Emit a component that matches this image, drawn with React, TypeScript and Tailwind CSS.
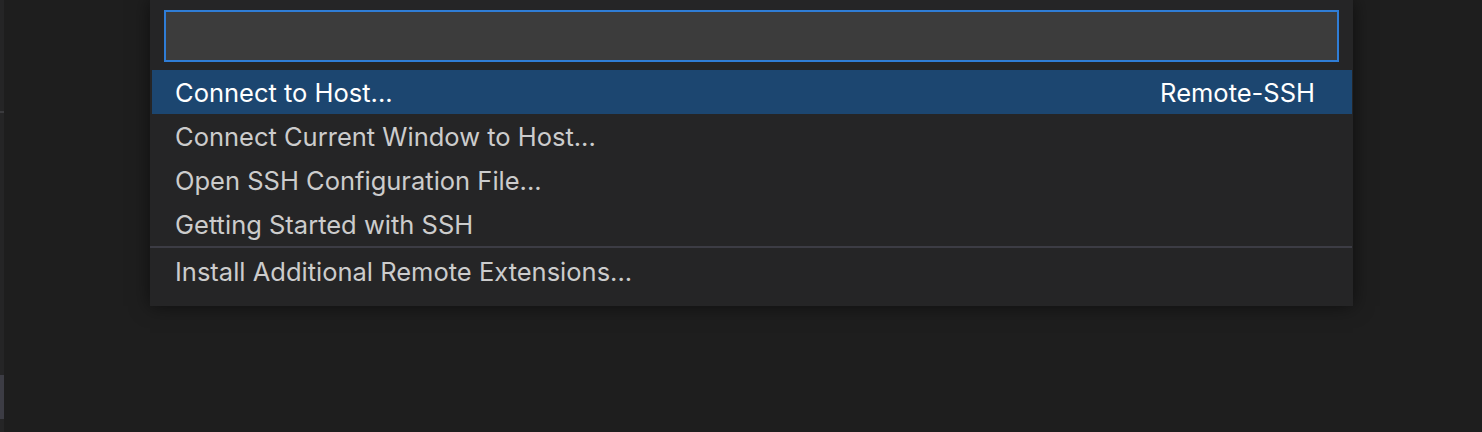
import React from "react";

const ITEMS = [
    { label: "Connect to Host...", detail: "Remote-SSH", selected: true },
    { label: "Connect Current Window to Host..." },
    { label: "Open SSH Configuration File..." },
    { label: "Getting Started with SSH" },
];

export default function App() {
    return (
        <div
            className="relative w-[1482px] h-[432px] overflow-hidden bg-[#1e1e1e]"
            style={{ fontFamily: "Inter, 'Noto Sans', sans-serif" }}
        >
            {/* left edge of sidebar */}
            <div className="absolute left-0 top-0 h-full w-[4px] bg-[#252526]">
                <div className="mt-[111px] h-[2px] bg-[#3a3a3d]" />
                <div className="mt-[262px] h-[44px] bg-[#3c3c44]" />
            </div>

            {/* quick pick */}
            <div className="absolute left-[150px] top-0 w-[1203px] h-[306px] bg-[#252526] shadow-[0_0_18px_rgba(0,0,0,0.55)] flex flex-col">
                <div className="px-[14px] pt-[10px] pb-[8px]">
                    <div className="h-[52px] border-2 border-[#2f7dd6] bg-[#3c3c3c]" />
                </div>
                <div className="flex flex-col pl-[2px] pr-[1px]">
                    {ITEMS.map((item) => (
                        <div
                            key={item.label}
                            className={
                                item.selected
                                    ? "h-[44px] flex items-center justify-between pt-[2px] pl-[23px] pr-[37px] bg-[#1c4670] text-white"
                                    : "h-[44px] flex items-center justify-between pt-[2px] pl-[23px] pr-[37px] text-[#cccccc]"
                            }
                        >
                            <span className="text-[25.5px] leading-none">{item.label}</span>
                            {item.detail && <span className="text-[25.5px] leading-none">{item.detail}</span>}
                        </div>
                    ))}
                    <div className="h-[2px] bg-[#3c3c44] -ml-[2px]" />
                    <div className="h-[46px] flex items-center pt-[2px] pl-[23px] text-[#cccccc]">
                        <span className="text-[25.5px] leading-none">Install Additional Remote Extensions...</span>
                    </div>
                </div>
            </div>
        </div>
    );
}
